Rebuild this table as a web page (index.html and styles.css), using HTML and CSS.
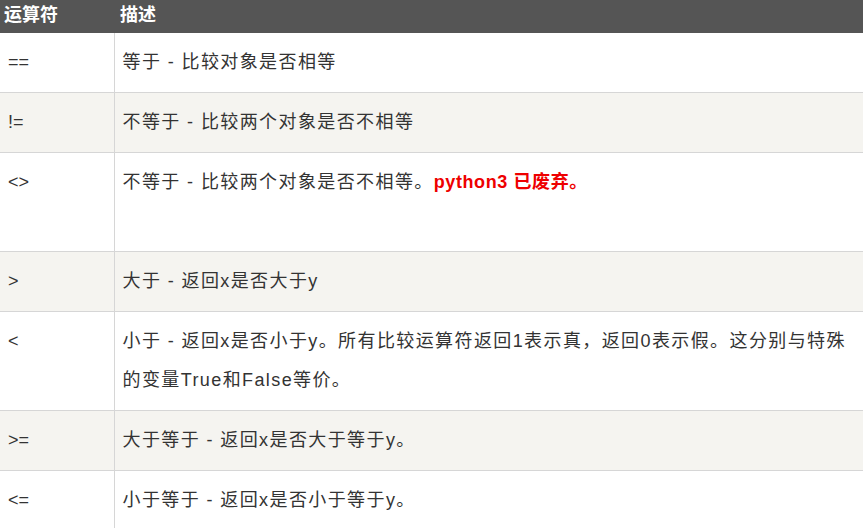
FILE: index.html
```html
<!DOCTYPE html>
<html lang="zh">
<head>
<meta charset="utf-8">
<link rel="stylesheet" href="styles.css">
</head>
<body>
<table class="ops">
  <thead>
    <tr><th class="c1">运算符</th><th class="c2">描述</th></tr>
  </thead>
  <tbody>
    <tr><td class="c1">==</td><td class="c2">等于 - 比较对象是否相等</td></tr>
    <tr class="alt"><td class="c1">!=</td><td class="c2">不等于 - 比较两个对象是否不相等</td></tr>
    <tr><td class="c1">&lt;&gt;</td><td class="c2">不等于 - 比较两个对象是否不相等。<span class="warn">python3 已废弃。</span><br><br></td></tr>
    <tr class="alt"><td class="c1">&gt;</td><td class="c2">大于 - 返回x是否大于y</td></tr>
    <tr><td class="c1">&lt;</td><td class="c2">小于 - 返回x是否小于y。所有比较运算符返回1表示真，返回0表示假。这分别与特殊的变量True和False等价。</td></tr>
    <tr class="alt"><td class="c1">&gt;=</td><td class="c2">大于等于 - 返回x是否大于等于y。</td></tr>
    <tr><td class="c1">&lt;=</td><td class="c2">小于等于 - 返回x是否小于等于y。</td></tr>
  </tbody>
</table>
</body>
</html>
```

FILE: styles.css
```css
html, body {
  margin: 0;
  padding: 0;
  background: #fff;
}
body {
  font-family: "Liberation Sans", "Noto Sans CJK SC", sans-serif;
  color: #333;
}
.ops {
  border-collapse: collapse;
  width: 863px;
  table-layout: fixed;
}
.ops th {
  background: #555;
  color: #fff;
  font-weight: bold;
  font-size: 18px;
  text-align: left;
  height: 33px;
  padding: 0 4px;
  line-height: 31px;
  vertical-align: top;
  box-sizing: border-box;
}
.ops th.c2 { padding-left: 6px; }
.ops .c1 { width: 114px; }
.ops td {
  font-size: 18px;
  letter-spacing: 1.4px;
  line-height: 39px;
  padding: 10px 8px 10px 8px;
  vertical-align: top;
  border-bottom: 1px solid #d6d6d6;
}
.ops td.c1 { letter-spacing: 0; }
.ops td.c2 {
  border-left: 1px solid #d6d6d6;
  padding-left: 8px;
}
.ops tr.alt td { background: #f5f4f0; }
.warn {
  color: #e00;
  font-weight: bold;
  letter-spacing: 0.6px;
}
```
